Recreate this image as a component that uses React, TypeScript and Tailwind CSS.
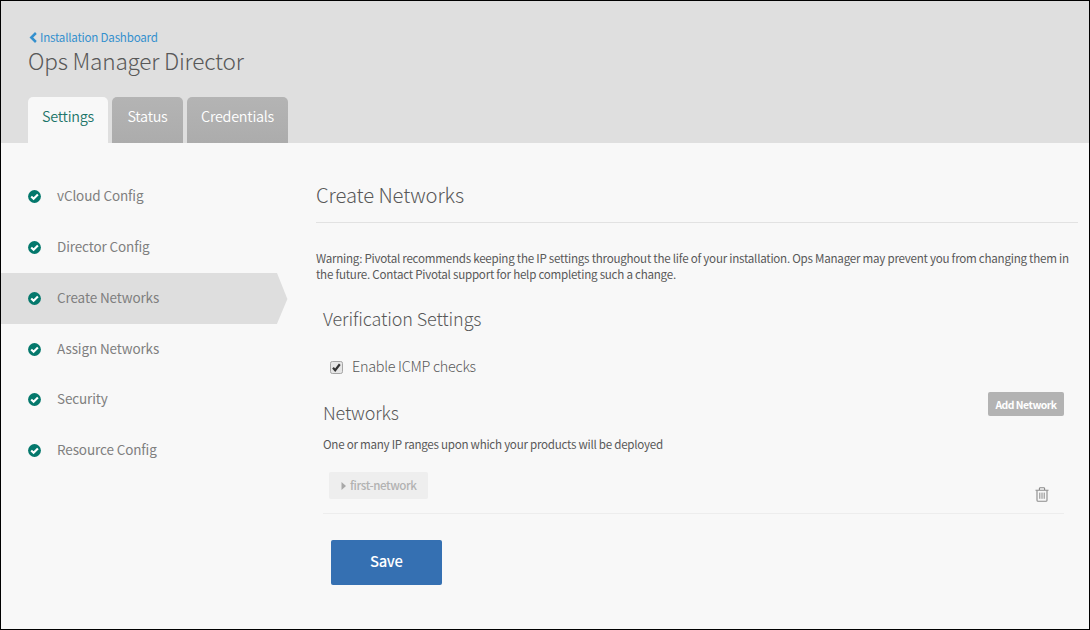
import React from "react";

const steps = [
  "vCloud Config",
  "Director Config",
  "Create Networks",
  "Assign Networks",
  "Security",
  "Resource Config",
];

function CheckCircle() {
  return (
    <svg className="size-[13px] shrink-0" viewBox="0 0 13 13">
      <circle cx="6.5" cy="6.5" r="6.4" fill="#04786c" />
      <path d="M3.2 6.4 5.6 8.8 9.9 4.5" fill="none" stroke="#fff" strokeWidth="2.1" />
    </svg>
  );
}

function Trash() {
  return (
    <svg className="h-[15px] w-[14px]" viewBox="0 0 14 15" fill="none" stroke="#8a8a8a">
      <path d="M0.5 3.3h13M4.4 3V1.6q0-.9.9-.9h3.4q.9 0 .9.9V3" strokeWidth="1.1" />
      <path d="M2 3.5v9.7q0 1.1 1.1 1.1h7.8q1.1 0 1.1-1.1V3.5" strokeWidth="1.1" />
      <path d="M4.8 5.6v6.2M7 5.6v6.2M9.2 5.6v6.2" strokeWidth="1" />
    </svg>
  );
}

export default function App() {
  return (
    <div className="flex h-[630px] w-[1090px] flex-col border border-black bg-[#f8f8f8] font-['Noto_Sans_CJK_SC',sans-serif] whitespace-nowrap text-[#585858]">
      <header className="flex h-[142px] shrink-0 flex-col bg-[#dfdfdf] pl-[27px]">
        <a className="mt-[28px] flex h-[16px] items-center gap-[3px] pl-px text-[11.6px] leading-[16px] tracking-[-0.22px] text-[#3490ce]">
          <svg className="h-[11px] w-[8px]" viewBox="0 0 8 11">
            <path d="M6.9 1 2.3 5.5 6.9 10" fill="none" stroke="#3490ce" strokeWidth="2.5" />
          </svg>
          Installation Dashboard
        </a>
        <h1 className="h-[32px] text-[22.6px] leading-[32px] font-light tracking-[-0.2px]">Ops Manager Director</h1>
        <nav className="mt-auto flex h-[46px] gap-[4px] text-[14.4px] leading-[38px] font-[350] tracking-[-0.25px] text-white">
          <a className="w-[80px] rounded-t-[5px] bg-[#f8f8f8] text-center text-[#1d7569]">Settings</a>
          <a className="w-[71px] rounded-t-[5px] bg-linear-to-b from-[#b4b4b4] to-[#acacac] text-center">Status</a>
          <a className="w-[101px] rounded-t-[5px] bg-linear-to-b from-[#b4b4b4] to-[#acacac] text-center">Credentials</a>
        </nav>
      </header>
      <main className="flex min-h-0 flex-1">
        <ul className="flex w-[315px] shrink-0 flex-col pt-[28.3px]">
          {steps.map((s) => (
            <li key={s} className="flex h-[50.8px]">
              <div
                className={
                  "flex w-[276px] items-center gap-[16px] pl-[27px] text-[13.5px] leading-[20px] tracking-[-0.12px] text-[#7f7f7f] " +
                  (s === "Create Networks" ? "bg-[#dedede]" : "")
                }
              >
                <CheckCircle />
                <span className="-mt-[3px]">{s}</span>
              </div>
              {s === "Create Networks" && (
                <svg className="h-full w-[11px]" viewBox="0 0 11 51" preserveAspectRatio="none">
                  <path d="M0 0 10.4 26 0 51z" fill="#dedede" />
                </svg>
              )}
            </li>
          ))}
        </ul>
        <section className="flex w-[762px] flex-col">
          <h2 className="mt-[36px] h-[44px] border-b border-[#e2e2e2] text-[20.2px] leading-[32px] font-light tracking-[-0.1px]">Create Networks</h2>
          <p className="mt-[27px] text-[11.6px] leading-[16px] tracking-[-0.248px]">
            Warning: Pivotal recommends keeping the IP settings throughout the life of your installation. Ops Manager may prevent you from changing them in
            <br />
            the future. Contact Pivotal support for help completing such a change.
          </p>
          <div className="flex w-[748px] flex-col pl-[7px]">
            <h3 className="mt-[22px] text-[18px] leading-[28px] font-light tracking-[-0.1px]">Verification Settings</h3>
            <label className="mt-[22px] flex h-[24px] items-center gap-[9px] pl-[7px] text-[14.4px] leading-[24px] font-light tracking-[-0.28px]">
              <svg className="mt-[2px] size-[13px]" viewBox="0 0 13 13">
                <rect x="0.5" y="0.5" width="12" height="12" rx="1.8" fill="#e6e6e6" stroke="#a5a5a5" />
                <path d="M3 6.7 5.2 9.2 9.8 3.3" fill="none" stroke="#333" strokeWidth="2.2" />
              </svg>
              Enable ICMP checks
            </label>
            <div className="mt-[14px] flex h-[44px] justify-between">
              <h3 className="mt-[6px] text-[18px] leading-[28px] font-light tracking-[-0.15px]">Networks</h3>
              <button className="h-[24px] w-[76px] rounded-[2px] bg-[#b3b3b3] text-[10.4px] leading-[25px] font-bold tracking-[-0.5px] text-white">Add Network</button>
            </div>
            <p className="text-[11.6px] leading-[17px] tracking-[-0.26px]">One or many IP ranges upon which your products will be deployed</p>
            <div className="mt-[19px] flex h-[42px] items-start justify-between border-b border-[#ededed] pl-[6px] pr-[15px]">
              <button className="flex h-[27px] w-[99px] items-center gap-[4px] rounded-[2px] bg-[#eeeeee] pl-[12px] text-[11.6px] leading-[27px] font-medium tracking-[-0.42px] text-[#b2b2b2]">
                <svg className="h-[8px] w-[5px]" viewBox="0 0 5 8">
                  <path d="M0.5 0 5 4 0.5 8z" fill="#a8a8a8" />
                </svg>
                <span className="-mt-px">first-network</span>
              </button>
              <button className="mt-[15px]"><Trash /></button>
            </div>
            <button className="mt-[26px] ml-[7.5px] h-[45px] w-[111.5px] rounded-[2px] bg-[#3570b2] pb-[4px] text-[14.8px] leading-[41px] font-medium tracking-[-0.4px] text-white">Save</button>
          </div>
        </section>
      </main>
    </div>
  );
}
